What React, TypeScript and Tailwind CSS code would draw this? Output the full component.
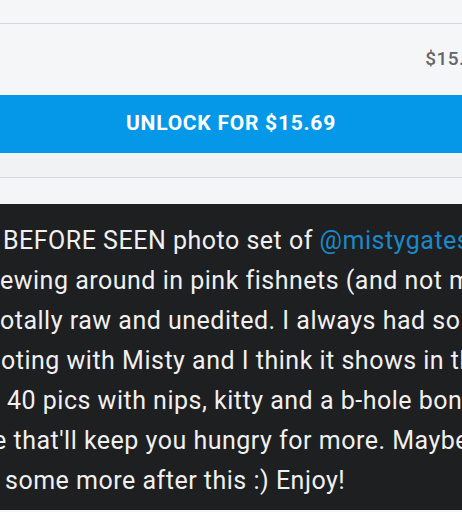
const lines: { pad: string; parts: { text: string; link?: boolean }[] }[] = [
  { pad: 'pl-[3px]', parts: [{ text: 'BEFORE SEEN photo set of ' }, { text: '@mistygates', link: true }] },
  { pad: 'pl-0', parts: [{ text: 'ewing around in pink fishnets (and not much else)' }] },
  { pad: 'pl-0', parts: [{ text: 'otally raw and unedited. I always had so much fun' }] },
  { pad: 'pl-[1px]', parts: [{ text: 'oting with Misty and I think it shows in these' }] },
  { pad: 'pl-[7px]', parts: [{ text: '40 pics with nips, kitty and a b-hole bonus' }] },
  { pad: '-ml-[7px]', parts: [{ text: 'e that\'ll keep you hungry for more. Maybe I\'ll' }] },
  { pad: 'pl-[5px]', parts: [{ text: 'some more after this :) Enjoy!' }] },
]

const App = (): JSX.Element => {
  return (
    <div className="w-[462px] h-[512px] overflow-hidden bg-[#f5f6f8] font-['Roboto',sans-serif]">
      <div className="h-[24px] border-b border-[#d6d7da]" />
      <div className="h-[71px] flex items-center justify-end overflow-hidden">
        <span className="text-[19px] font-medium text-[#666769] whitespace-nowrap -mr-[25px] tracking-[0.4px]">$15.69</span>
      </div>
      <button className="w-full h-[58px] bg-[#0597e8] flex items-center justify-center">
        <span className="text-[21px] font-bold text-white tracking-[0.75px]">UNLOCK FOR $15.69</span>
      </button>
      <div className="h-[25px] border-b border-[#d8d9dc] bg-[#f1f2f4]" />
      <div className="h-[26px] bg-[#f4f5f7]" />
      <div className="bg-[#1e1f21] pt-[17px] h-[306px] overflow-hidden">
        {lines.map((line, i) => (
          <div
            key={i}
            className={`whitespace-nowrap text-[25px] tracking-[0.5px] leading-[40px] text-[#f0f0f0] ${line.pad}`}
          >
            {line.parts.map((p, j) =>
              p.link ? (
                <span key={j} className="text-[#1b88c8]">
                  {p.text}
                </span>
              ) : (
                <span key={j}>{p.text}</span>
              )
            )}
          </div>
        ))}
      </div>
    </div>
  )
}

export default App
